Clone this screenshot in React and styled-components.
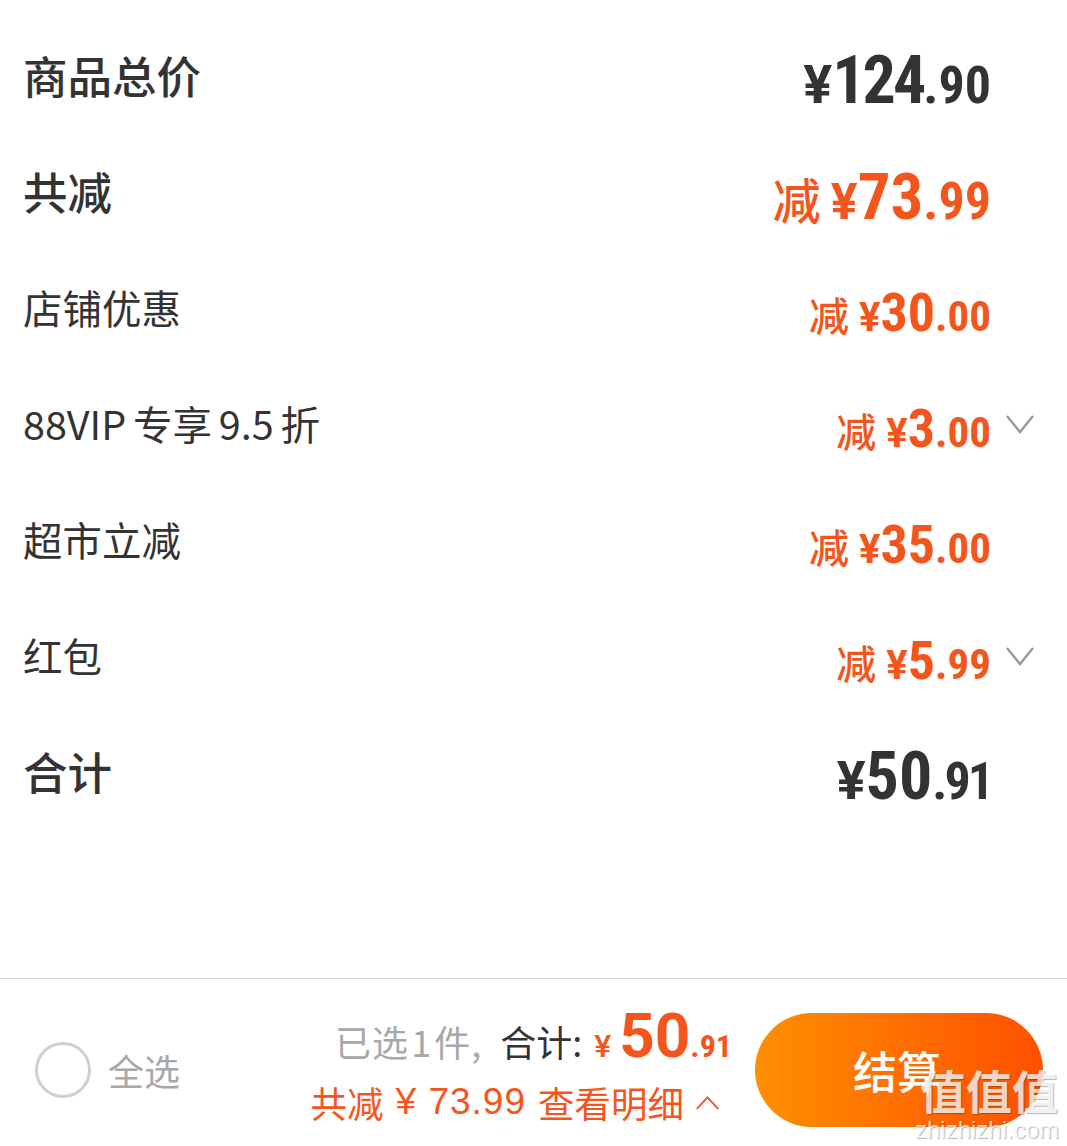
import styled, { createGlobalStyle } from "styled-components";

const Global = createGlobalStyle`
  html, body {
    margin: 0;
    background: #fff;
    overflow: hidden;
  }
`;

const CJK = `"Noto Sans CJK SC", "Noto Sans", sans-serif`;
const ORANGE = "#f4551c";
const DARK = "#333";

const SIZES = {
  xl: { cut: 48, yen: 54, int: 66, dec: 52 },
  lg: { cut: 48, yen: 50, int: 65, dec: 52 },
  md: { cut: 40, yen: 40, int: 54, dec: 43 },
};

const Page = styled.div`
  position: relative;
  width: 1067px;
  height: 1146px;
  overflow: hidden;
  font-family: ${CJK};
  color: ${DARK};
`;

const List = styled.div`
  height: 958px;
  padding-top: 20px;
`;

const Row = styled.div`
  display: flex;
  align-items: center;
  justify-content: space-between;
  height: 116px;
  padding: 0 33px 0 23px;
`;

const Label = styled.div`
  font-size: ${(p) => (p.$strong ? 44.5 : 39.5)}px;
  font-weight: ${(p) => (p.$strong ? 500 : 400)};
  line-height: 1;
  word-spacing: -2px;
  white-space: nowrap;
  margin-top: -6px;
`;

const Right = styled.div`
  display: flex;
  align-items: center;
`;

const Amount = styled.div`
  display: flex;
  align-items: baseline;
  font-weight: 700;
  line-height: 1;
  color: ${(p) => (p.$red ? ORANGE : DARK)};
  margin-top: 6px;
`;

const Cut = styled.span`
  font-family: ${CJK};
  font-weight: 500;
  font-size: ${(p) => SIZES[p.$size].cut}px;
  margin-right: 10px;
`;

const Yen = styled.span`
  font-family: Roboto, sans-serif;
  font-size: ${(p) => SIZES[p.$size].yen}px;
`;

const Int = styled.span`
  font-family: Roboto, sans-serif;
  font-stretch: 75%;
  letter-spacing: ${(p) => p.$track || 0}px;
  font-size: ${(p) => SIZES[p.$size].int}px;
`;

const Dec = styled.span`
  font-family: Roboto, sans-serif;
  font-stretch: 75%;
  letter-spacing: ${(p) => p.$track || 0}px;
  font-size: ${(p) => SIZES[p.$size].dec}px;
`;

const ChevronSlot = styled.div`
  display: flex;
  justify-content: flex-end;
  width: 43px;
  height: 24px;
`;

const Footer = styled.div`
  display: flex;
  align-items: center;
  height: 167px;
  padding: 16px 24px 0 35px;
  box-sizing: border-box;
  border-top: 1px solid #d9d9d9;
`;

const Radio = styled.div`
  box-sizing: border-box;
  width: 56px;
  height: 56px;
  border: 3px solid #cfcfcf;
  border-radius: 50%;
  flex: none;
`;

const AllLabel = styled.span`
  margin-left: 17px;
  font-size: 36px;
  color: #a8a8a8;
`;

const Summary = styled.div`
  display: flex;
  flex-direction: column;
  align-items: flex-end;
  margin-left: auto;
  margin-top: -6px;
  gap: 18px;
`;

const SummaryTop = styled.div`
  display: flex;
  align-items: baseline;
  height: 52px;
  line-height: 52px;
  font-size: 36px;
  margin-right: -1px;
`;

const Muted = styled.span`
  color: #a8a8a8;
  margin-right: 18px;
  letter-spacing: 1px;
  word-spacing: -7px;
`;

const Total = styled.span`
  color: #333;
  margin-right: 12px;
`;

const Big = styled.span`
  font-family: Roboto, sans-serif;
  font-stretch: ${(p) => p.$stretch}%;
  font-weight: 700;
  color: ${ORANGE};
  font-size: ${(p) => p.$px}px;
`;

const SmallYen = styled.span`
  font-family: Roboto, sans-serif;
  font-weight: 500;
  font-size: 32px;
  color: ${ORANGE};
  margin-right: 8px;
`;

const SummaryBottom = styled.div`
  display: flex;
  align-items: center;
  gap: 12px;
  height: 44px;
  font-size: 36.5px;
  color: ${ORANGE};
  white-space: pre;
  margin-right: 12px;
`;

const Latin = styled.span`
  font-family: "Liberation Sans", sans-serif;
  font-size: 37px;
  letter-spacing: 1px;
`;

const Pay = styled.div`
  display: flex;
  align-items: center;
  justify-content: center;
  flex: none;
  box-sizing: border-box;
  width: 288px;
  height: 114px;
  margin-left: 24px;
  padding-right: 4px;
  border-radius: 57px;
  background: linear-gradient(90deg, #ff8f00, #ff5000);
  color: #fff;
  font-size: 44px;
  font-weight: 500;
`;

const Mark = styled.div`
  position: absolute;
  right: 8px;
  bottom: 3px;
  display: flex;
  flex-direction: column;
  align-items: flex-end;
  color: rgba(255, 255, 255, 0.78);
  text-shadow: 1px 1px 1px rgba(0, 0, 0, 0.28);
`;

const MarkGlyphs = styled.div`
  font-size: 46px;
  line-height: 52px;
  margin-right: 1px;
  font-weight: 700;
`;

const MarkSite = styled.div`
  font-family: "Liberation Sans", sans-serif;
  font-size: 24px;
  line-height: 26px;
  margin-top: 2px;
`;

const Chevron = ({ up, size = 28, color = "#999" }) => (
  <svg width={size} height={size * 0.72} viewBox="0 0 28 20" fill="none">
    <polyline
      points={up ? "1,18 14,4 27,18" : "1,2 14,18 27,2"}
      stroke={color}
      strokeWidth="2.4"
    />
  </svg>
);

const rows = [
  { label: "商品总价", strong: true, size: "xl", int: "124", dec: ".90", intTrack: -3 },
  { label: "共减", strong: true, size: "lg", red: true, int: "73", dec: ".99" },
  { label: "店铺优惠", size: "md", red: true, int: "30", dec: ".00" },
  { label: "88VIP 专享 9.5 折", size: "md", red: true, int: "3", dec: ".00", more: true },
  { label: "超市立减", size: "md", red: true, int: "35", dec: ".00" },
  { label: "红包", size: "md", red: true, int: "5", dec: ".99", more: true },
  { label: "合计", strong: true, size: "xl", int: "50", dec: ".91", decTrack: -3 },
];

export default function App() {
  return (
    <Page>
      <Global />
      <List>
        {rows.map((r) => (
          <Row key={r.label}>
            <Label $strong={r.strong}>{r.label}</Label>
            <Right>
              <Amount $red={r.red}>
                {r.red && <Cut $size={r.size}>减</Cut>}
                <Yen $size={r.size}>¥</Yen>
                <Int $size={r.size} $track={r.intTrack}>{r.int}</Int>
                <Dec $size={r.size} $track={r.decTrack}>{r.dec}</Dec>
              </Amount>
              <ChevronSlot>{r.more && <Chevron />}</ChevronSlot>
            </Right>
          </Row>
        ))}
      </List>
      <Footer>
        <Radio />
        <AllLabel>全选</AllLabel>
        <Summary>
          <SummaryTop>
            <Muted>已选 1 件,</Muted>
            <Total>合计:</Total>
            <SmallYen>¥</SmallYen>
            <Big $px={62} $stretch={88}>50</Big>
            <Big $px={32} $stretch={75}>.91</Big>
          </SummaryTop>
          <SummaryBottom>
            共减
            <Latin>¥ 73.99</Latin>
            查看明细
            <Chevron up size={23} color={ORANGE} />
          </SummaryBottom>
        </Summary>
        <Pay>结算</Pay>
      </Footer>
      <Mark>
        <MarkGlyphs>值值值</MarkGlyphs>
        <MarkSite>zhizhizhi.com</MarkSite>
      </Mark>
    </Page>
  );
}
